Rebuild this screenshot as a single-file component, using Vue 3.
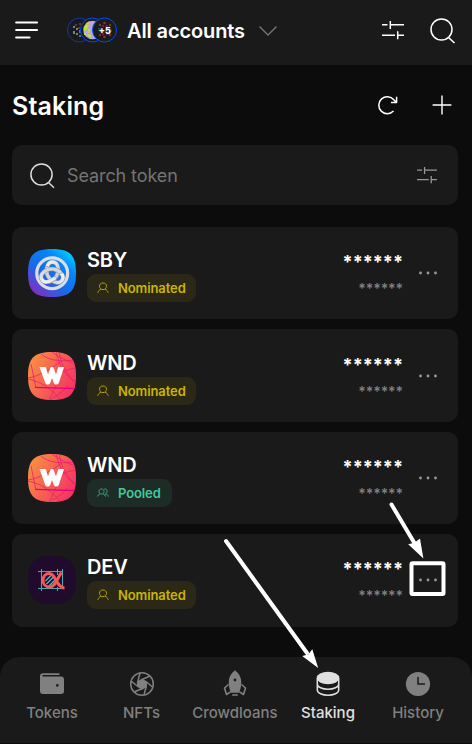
<script setup>
const stakes = [
  { symbol: 'SBY', logo: 'astar', type: 'Nominated' },
  { symbol: 'WND', logo: 'westend', type: 'Nominated' },
  { symbol: 'WND', logo: 'westend', type: 'Pooled' },
  { symbol: 'DEV', logo: 'alpha', type: 'Nominated' },
]
const tabs = ['Tokens', 'NFTs', 'Crowdloans', 'Staking', 'History']
const squircle = 'M24 0C42 0 48 6 48 24S42 48 24 48 0 42 0 24 6 0 24 0Z'
</script>

<template>
  <div class="screen">
    <header class="topbar">
      <svg class="menu" width="24" height="20" viewBox="0 0 24 20"><path d="M1.2 2.5H22M1.2 10H22M1.2 17.5H14.5" stroke="#fff" stroke-width="2.2" stroke-linecap="round" /></svg>
      <svg class="avatars" width="52" height="28" viewBox="0 0 52 28">
        <circle cx="13.5" cy="14" r="12" fill="#191a1d" stroke="#123a9c" />
        <g opacity=".7">
          <path d="M7 10h2v2H7zM7 15h2v3H7zM10 12h2v2h-2zM10 17h2v2h-2z" fill="#9db59b" />
          <path d="M9 8h2v2H9zM13 7h2v2h-2zM12 11h2v2h-2z" fill="#8b4338" />
          <path d="M13 14h2v3h-2zM13 19h2v2h-2z" fill="#729ca0" />
        </g>
        <circle cx="26.5" cy="14" r="12" fill="#1a1a1a" stroke="#004bff" />
        <circle cx="26.5" cy="14" r="9.3" fill="#b7a8dc" />
        <path d="M18 11l3-3 2 1-2 4-3 2zM18 17h2v2h-2zM22 13h2v3h-2zM21 18l2 3h2v-2z" fill="#b6f016" />
        <path d="M20 7l4-2v3l-3 1zM21 15h3v2h-3z" fill="#e5b760" />
        <circle cx="38.5" cy="14" r="12" fill="#1a1a1a" stroke="#004bff" />
        <g fill="#70430b"><circle cx="38.5" cy="7" r="1.3" /><circle cx="34" cy="9" r="1.2" /><circle cx="44" cy="9" r="1.2" /><circle cx="38.5" cy="21" r="1.3" /><circle cx="34" cy="19" r="1.2" /><circle cx="44" cy="19" r="1.2" /></g>
        <g fill="#880b72"><circle cx="37" cy="10" r="1.3" /><circle cx="40.5" cy="10" r="1.3" /><circle cx="37" cy="18" r="1.3" /><circle cx="41" cy="18" r="1.3" /></g>
        <path d="M32 12h3v3h-3zM43 13h3v3h-3z" fill="#174b32" />
        <text x="38.8" y="18" text-anchor="middle" class="more">+5</text>
      </svg>
      <span class="account">All accounts</span>
      <svg class="chevron" width="20" height="12" viewBox="0 0 20 12"><path d="M1.500 1.500L10 10l8.500-8.500" stroke="#777" stroke-width="1.300" fill="none" /></svg>
      <svg class="top-filter" width="24" height="20" viewBox="0 0 24 20"><path d="M1 4.700h5.500M9.300 4.700H23M9.300 1v8M1 15.200h13M16.700 15.200H23M16.700 11.200v8" stroke="#fff" stroke-width="1.500" /></svg>
      <svg class="top-search" width="27" height="27" viewBox="0 0 27 27"><circle cx="12.500" cy="12.500" r="10.500" fill="none" stroke="#fff" stroke-width="1.500" /><path d="M19.500 20.500l6 5.500" stroke="#fff" stroke-width="1.600" /></svg>
    </header>

    <main class="content">
      <div class="heading">
        <h1>Staking</h1>
        <svg class="refresh" width="22" height="22" viewBox="0 0 22 22"><path d="M17.500 17A8.500 8.500 0 1 1 17.800 5.700L20 8M20.600 2.800v5.600H15" fill="none" stroke="#fff" stroke-width="1.500" stroke-linejoin="round" /></svg>
        <svg width="20" height="20" viewBox="0 0 20 20"><path d="M10 .6v18.800M.6 10h18.800" stroke="#fff" stroke-width="1.400" /></svg>
      </div>

      <div class="search">
        <svg width="27" height="27" viewBox="0 0 27 27"><circle cx="12.500" cy="12.500" r="10.600" fill="none" stroke="#ddd" stroke-width="1.500" /><path d="M19.500 20.500l5.500 5.300" stroke="#ddd" stroke-width="1.500" /></svg>
        <span>Search token</span>
        <svg class="filter" width="22" height="18" viewBox="0 0 24 20"><path d="M1 4.700h5.500M9.300 4.700H23M9.300 1v8M1 15.200h13M16.700 15.200H23M16.700 11.200v8" stroke="#999" stroke-width="1.400" /></svg>
      </div>

      <section class="list">
        <article v-for="(stake, i) in stakes" :key="i" class="card">
          <svg v-if="stake.logo === 'astar'" class="logo" viewBox="0 0 48 48">
            <defs>
              <linearGradient id="astar-bg" x1="0" y1="1" x2=".85" y2="0"><stop stop-color="#a51ab7" /><stop offset=".45" stop-color="#176be9" /><stop offset=".75" stop-color="#0785fb" /><stop offset="1" stop-color="#00d5ff" /></linearGradient>
              <linearGradient id="silver" x1="0" y1="0" x2="1" y2="1"><stop stop-color="#f4f4f4" /><stop offset="1" stop-color="#c8c9cd" /></linearGradient>
            </defs>
            <path :d="squircle" fill="url(#astar-bg)" />
            <circle cx="24.200" cy="24.200" r="15.400" fill="none" stroke="#dcdde0" stroke-width="3.200" />
            <g fill="none" stroke-linecap="round">
              <g v-for="a in [0, 120, 240]" :key="a" :transform="`rotate(${a} 24.2 24.8)`">
                <path d="M19 24.500C18.500 17 20 13 24.500 13s6.500 5 5.500 10-4 8-8 9.500" stroke="#7d8fb8" stroke-width="4.200" />
                <path d="M19 24.500C18.500 17 20 13 24.500 13s6.500 5 5.500 10-4 8-8 9.500" stroke="url(#silver)" stroke-width="3.300" />
              </g>
            </g>
          </svg>
          <svg v-else-if="stake.logo === 'westend'" class="logo" viewBox="0 0 48 48">
            <defs>
              <linearGradient :id="`west-${i}`" x1="0" y1=".2" x2="1" y2=".75"><stop stop-color="#f99040" /><stop offset="1" stop-color="#f33164" /></linearGradient>
              <clipPath :id="`clip-${i}`"><path :d="squircle" /></clipPath>
            </defs>
            <g :clip-path="`url(#clip-${i})`">
              <path d="M0 0h48v48H0z" :fill="`url(#west-${i})`" />
              <path d="M13 2C20 8 30 10 48 8M24 0C31 5 40 10 48 12M28 0C31 12 36 24 48 30M31 0C34 16 40 22 46 30M34 9C22 17 12 24 0 26M48 16C40 17 32 20 24 25M3 12L8 36M0 27C14 30 22 36 33 48M39 34C36 40 27 44 22 48M31 22C30 32 25 40 21 48" stroke="#ef1d76" stroke-width=".8" fill="none" />
              <path d="M7 35.400L48 36.700" stroke="#e6007a" stroke-width="1.200" />
            </g>
            <path d="M11.500 15h5.400c.8 0 1 .3 1.200 1l1.900 6.500 2.300-6.500c.3-.7.700-1 1.700-1s1.400.3 1.700 1l2.300 6.500 1.900-6.500c.2-.7.400-1 1.200-1h5l-5.200 15.500c-.5 1.400-1.300 2-2.700 2s-2-.7-2.500-1.800L24 26l-1.700 4.700c-.5 1.100-1.200 1.800-2.500 1.800-1.400 0-2.200-.6-2.700-2Z" fill="#fff" />
          </svg>
          <svg v-else class="logo" viewBox="0 0 48 48">
            <path :d="squircle" fill="#200b2d" />
            <path d="M10 15.500h25M10 32.500h23M13.500 13v22M29.500 13v6M29.500 31v4M34.500 13v19" stroke="#46aab0" stroke-width="1.100" />
            <path d="M17.500 25l6.500-6.500M18.500 28l8-8M21 30l7-7" stroke="#5bbcc0" stroke-width="1.300" />
            <path d="M33.500 16.500C29 22 28 31 21.500 31 17.500 31 15 28 15 24.200S17.500 17.500 21.500 17.500C28 17.500 28 31.500 36.500 32" fill="none" stroke="#fb5655" stroke-width="3" />
          </svg>

          <div class="info">
            <div class="symbol">{{ stake.symbol }}</div>
            <div class="badge" :class="stake.type.toLowerCase()">
              <svg v-if="stake.type === 'Nominated'" width="12" height="12" viewBox="0 0 12 12"><path d="M6 1C3.700 1 2.500 2.300 2.500 4.200S4 7.600 6 7.600s3.500-1.500 3.500-3.400S8.300 1 6 1ZM4 7.200C2.300 7.800 1.300 9 .8 10.800M8 7.200c1.700.6 2.700 1.800 3.200 3.600" fill="none" stroke="currentColor" /></svg>
              <svg v-else width="12" height="12" viewBox="0 0 12 12"><path d="M4.500 2C2.900 2 2 3 2 4.500S3 7 4.500 7 7 6 7 4.500 6.100 2 4.500 2ZM3 6.800C1.700 7.300.8 8.300.4 9.600M6 6.800c1.300.5 2.200 1.500 2.600 2.800M7.200 2c1.800-.3 2.900.8 2.900 2.300S9 7 8.200 7c1.800.2 3 1.200 3.400 2.600" fill="none" stroke="currentColor" stroke-width=".9" /></svg>
              <span>{{ stake.type }}</span>
            </div>
          </div>
          <div class="amounts"><div class="balance">******</div><div class="value">******</div></div>
          <svg class="dots" width="20" height="4" viewBox="0 0 20 4"><g fill="#999"><circle cx="2.500" cy="2" r="1.400" /><circle cx="10" cy="2" r="1.400" /><circle cx="17.500" cy="2" r="1.400" /></g></svg>
        </article>
      </section>
    </main>

    <nav class="tabs">
      <div v-for="tab in tabs" :key="tab" class="tab" :class="{ active: tab === 'Staking' }">
        <svg width="28" height="28" viewBox="0 0 28 28">
          <g v-if="tab === 'Tokens'"><path d="M21.500 3.300H5.200C3.300 3.300 2 4.400 2 6v15c0 2 1 3 3 3h18c2 0 3-1 3-3V9.500c0-2-1-3-3-3H4.500V5h17Z" fill="currentColor" /><circle cx="19.300" cy="15.400" r="1.300" fill="#1a1a1a" /></g>
          <g v-else-if="tab === 'NFTs'" fill="none" stroke="currentColor" stroke-width="1.500"><circle cx="14" cy="14" r="11.300" /><path d="M14 9.500l4.200 2.500v4.500L14 18.800l-4.200-2.500V12Z" fill="currentColor" /><path d="M9.500 13L12 3M13 10l9-4M18 11.500l7 6M18.500 15.500L16 25M14.500 18.500L6 22M10 16.500L3 11" /></g>
          <g v-else-if="tab === 'Crowdloans'"><path d="M14 .2c-4 3-6.300 7-6.300 12 0 4 1.200 7.500 2 10.500h8.600c.8-3 2-6.500 2-10.500 0-5-2.300-9-6.300-12Z" fill="currentColor" /><circle cx="14" cy="10" r="1.400" fill="#1a1a1a" /><path d="M7.500 14.500L3.500 18l2 6.500 4-2.700M20.500 14.500l4 3.500-2 6.500-4-2.700M11.200 25h5.600" fill="none" stroke="currentColor" stroke-width="1.600" stroke-linejoin="round" /></g>
          <g v-else-if="tab === 'Staking'"><ellipse cx="14" cy="8" rx="11.300" ry="6.200" fill="currentColor" /><path d="M3.300 8v12c0 3 5 5.200 10.700 5.200S24.700 23 24.700 20V8M3.300 14c0 3 5 5.200 10.700 5.200S24.700 17 24.700 14" fill="none" stroke="currentColor" stroke-width="1.500" /></g>
          <g v-else><circle cx="14" cy="14" r="12.100" fill="currentColor" /><path d="M14 7v7h7" fill="none" stroke="#1a1a1a" stroke-width="1.500" /></g>
        </svg>
        <span>{{ tab }}</span>
      </div>
    </nav>

    <svg class="pointers" width="472" height="744" viewBox="0 0 472 744">
      <path d="M226 541l81 112M391.500 504.500L415 544" stroke="#fff" stroke-width="4" stroke-linecap="round" />
      <path d="M318.200 668l-16-12 6-1.500 4.100-5.200ZM423.400 558.500l-15.200-14.300 6.300-1.500 5.500-4.200Z" fill="#fff" />
      <rect x="411.500" y="563.300" width="32" height="30.600" rx="1" fill="none" stroke="#fff" stroke-width="4" />
    </svg>
  </div>
</template>

<style>
body { background: #0c0c0c; }
</style>
<style scoped>
.screen { position: relative; width: 472px; height: 744px; overflow: hidden; display: flex; flex-direction: column; background: #0c0c0c; color: #fff; font-family: Inter, "Open Sans", sans-serif; }
svg { display: block; flex: none; }
.topbar { height: 65px; flex: none; display: flex; align-items: center; padding: 0 16px 5px 15px; box-sizing: border-box; background: #1a1a1a; }
.avatars { margin-left: 27px; }
.more { font-size: 9px; font-weight: 800; fill: #fff; }
.account { margin-left: 9px; padding-top: 1px; width: 120px; font-size: 20px; font-weight: 600; letter-spacing: -0.12px; white-space: nowrap; }
.chevron { margin-left: 11px; margin-top: 2px; }
.top-filter { margin-left: auto; }
.top-search { margin-left: 24px; }
.content { flex: 1; padding: 0 14px 0 12px; }
.heading { height: 80px; display: flex; align-items: center; padding-right: 6px; }
h1 { flex: 1; margin: 0; padding-top: 2px; font-size: 25px; font-weight: 600; letter-spacing: 0.15px; line-height: 32px; }
.refresh { margin-right: 34px; }
.search { height: 60px; box-sizing: border-box; display: flex; align-items: center; padding: 0 20px 0 17px; border-radius: 10px; background: #1a1a1a; color: #747474; font-size: 18px; letter-spacing: -0.1px; }
.search span { margin-left: 11px; }
.filter { margin-left: auto; }
.list { margin-top: 22px; display: flex; flex-direction: column; gap: 10px; }
.card { height: 92.4px; box-sizing: border-box; padding: 0 20px 0 16px; display: flex; align-items: center; border-radius: 10px; background: #1a1a1a; }
.logo { width: 48px; height: 48px; }
.info { margin-left: 11px; padding-top: 2px; }
.symbol { height: 28px; line-height: 28px; font-size: 20px; font-weight: 600; letter-spacing: -0.15px; }
.badge { width: 109px; height: 28px; box-sizing: border-box; padding-left: 10px; display: flex; align-items: center; gap: 9px; border-radius: 9px; font-size: 13px; font-weight: 600; letter-spacing: -0.1px; }
.nominated { background: #2c2818; color: #c9b500; }
.pooled { width: 85px; background: #1e2c28; color: #42c99a; }
.badge svg { opacity: .85; }
.amounts { margin-left: auto; width: 60px; padding-top: 2px; display: flex; flex-direction: column; align-items: flex-end; }
.balance { height: 28px; line-height: 31px; font-size: 18px; font-weight: 700; }
.value { height: 28px; line-height: 30px; font-size: 14px; font-weight: 600; letter-spacing: -0.1px; color: #808080; }
.dots { margin-left: 15px; }
.tabs { height: 86px; flex: none; margin-bottom: 1px; box-sizing: border-box; padding-top: 13px; display: grid; grid-template-columns: 104px 75px 112px 74px 106px; border-radius: 20px 20px 0 0; background: #1a1a1a; }
.tab { display: flex; flex-direction: column; align-items: center; color: #808080; font-size: 15px; font-weight: 500; }
.tab span { margin-top: 4px; line-height: 22px; white-space: nowrap; }
.active { color: #e0e0e0; }
.pointers { position: absolute; left: 0; top: 0; pointer-events: none; }
</style>
